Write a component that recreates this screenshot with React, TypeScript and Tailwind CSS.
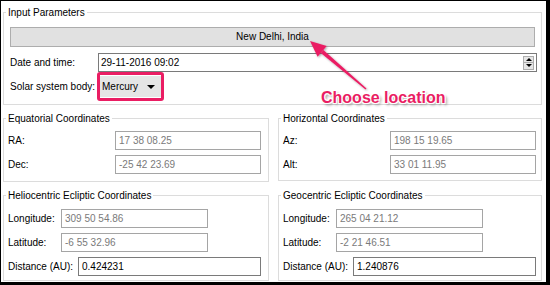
import React from 'react';

const GroupBox = ({ title, className, children }: { title: string; className: string; children: React.ReactNode }) => (
  <div className={`relative border border-[#dcdcdc] ${className}`}>
    <span className="absolute left-[2px] top-[-7px] bg-white px-[2px] leading-[13px] text-black">{title}</span>
    {children}
  </div>
);

const Field = ({ value, width, dim = true }: { value: string; width: string; dim?: boolean }) => (
  <div
    className={`h-[19px] ${width} border bg-white pl-[3px] leading-[17px] ${
      dim ? 'border-[#a5a5a5] text-[#7a7a7a]' : 'border-[#7a7a7a] text-black'
    }`}
  >
    {value}
  </div>
);

const Row = ({ label, labelWidth, children }: { label: string; labelWidth: string; children: React.ReactNode }) => (
  <div className="flex items-center">
    <div className={labelWidth}>{label}</div>
    {children}
  </div>
);

const EclipticBox = ({ title, lon, lat, dist }: { title: string; lon: string; lat: string; dist: string }) => (
  <GroupBox title={title} className="h-[86px] pl-[4px] pt-[13px]">
    <div className="flex flex-col gap-[5px]">
      <Row label="Longitude:" labelWidth="w-[53px]">
        <Field value={lon} width="w-[147px]" />
      </Row>
      <Row label="Latitude:" labelWidth="w-[53px]">
        <Field value={lat} width="w-[147px]" />
      </Row>
      <Row label="Distance (AU):" labelWidth="w-[70px]">
        <Field value={dist} width="w-[183px]" dim={false} />
      </Row>
    </div>
  </GroupBox>
);

export default function App() {
  return (
    <div className="relative w-[550px] h-[285px] overflow-hidden border-l border-t border-r-[4px] border-b-[3px] border-black bg-white font-['Liberation_Sans',Arial,sans-serif] text-[10px] text-black">
      <div className="flex flex-col pl-[2px] pr-[4px]">
        <GroupBox title="Input Parameters" className="mt-[11px] h-[93px] px-[6px] pt-[14px]">
          <div className="flex flex-col">
            <button className="h-[20px] w-full border border-[#adadad] bg-[#e1e1e1] leading-[18px]">New Delhi, India</button>
            <div className="mt-[6px] flex items-center">
              <div className="w-[88px]">Date and time:</div>
              <div className="mr-[-2px] flex h-[19px] flex-1 items-center justify-between border border-[#7a7a7a] bg-white pl-[2px] pr-[2px]">
                <span>29-11-2016 09:02</span>
                <div className="flex h-[14px] w-[11px] flex-col border border-[#adadad] bg-[#e6e6e6]">
                  <div className="flex flex-1 items-center justify-center border-b border-[#adadad]">
                    <span className="h-0 w-0 border-x-[3px] border-b-[3px] border-x-transparent border-b-black" />
                  </div>
                  <div className="flex flex-1 items-center justify-center">
                    <span className="h-0 w-0 border-x-[3px] border-t-[3px] border-x-transparent border-t-black" />
                  </div>
                </div>
              </div>
            </div>
            <div className="mt-[4px] flex items-center">
              <div className="w-[89px]">Solar system body:</div>
              <div className="flex h-[21px] w-[62px] items-center justify-between bg-[#e5e5e5] pl-[3px] pr-[6px]">
                <span>Mercury</span>
                <span className="h-0 w-0 border-x-[4px] border-t-[4px] border-x-transparent border-t-black" />
              </div>
            </div>
          </div>
        </GroupBox>

        <div className="mt-[13px] grid grid-cols-[266px_264px] gap-x-[9px]">
          <GroupBox title="Equatorial Coordinates" className="h-[64px] pl-[4px] pt-[12px]">
            <div className="flex flex-col gap-[5px]">
              <Row label="RA:" labelWidth="w-[107px]">
                <Field value="17 38 08.25" width="w-[146px]" />
              </Row>
              <Row label="Dec:" labelWidth="w-[107px]">
                <Field value="-25 42 23.69" width="w-[146px]" />
              </Row>
            </div>
          </GroupBox>
          <GroupBox title="Horizontal Coordinates" className="h-[63px] pl-[4px] pt-[12px]">
            <div className="flex flex-col gap-[5px]">
              <Row label="Az:" labelWidth="w-[107px]">
                <Field value="198 15 19.65" width="w-[146px]" />
              </Row>
              <Row label="Alt:" labelWidth="w-[107px]">
                <Field value="33 01 11.95" width="w-[146px]" />
              </Row>
            </div>
          </GroupBox>
        </div>

        <div className="mt-[13px] grid grid-cols-[266px_264px] gap-x-[9px]">
          <EclipticBox title="Heliocentric Ecliptic Coordinates" lon="309 50 54.86" lat="-6 55 32.96" dist="0.424231" />
          <EclipticBox title="Geocentric Ecliptic Coordinates" lon="265 04 21.12" lat="-2 21 46.51" dist="1.240876" />
        </div>
      </div>

      {/* annotation overlay */}
      <div className="absolute left-[96px] top-[71px] h-[29px] w-[67px] rounded-[3px] border-[3px] border-[#ea1d63]" />
      <svg className="pointer-events-none absolute left-[-1px] top-[-1px]" width="550" height="285">
        <defs>
          <filter id="sh" x="-20%" y="-20%" width="140%" height="140%">
            <feDropShadow dx="1" dy="1" stdDeviation="1" floodColor="#000" floodOpacity="0.35" />
          </filter>
        </defs>
        <g filter="url(#sh)" fill="#ea1d63">
          <polygon points="366.5,88.4 365.5,89.6 320.8,52.9 323.4,49.9" />
          <polygon points="310,41 326.7,46.1 317.6,56.7" />
        </g>
      </svg>
      <div className="absolute left-[320px] top-[89px] font-['Liberation_Sans',Arial,sans-serif] text-[16px] font-bold leading-[16px] text-[#ea1d63] [text-shadow:1px_1px_0_#fff,-1px_-1px_0_#fff,1px_-1px_0_#fff,-1px_1px_0_#fff,2px_2px_3px_rgba(0,0,0,0.45)]">
        Choose location
      </div>
    </div>
  );
}
